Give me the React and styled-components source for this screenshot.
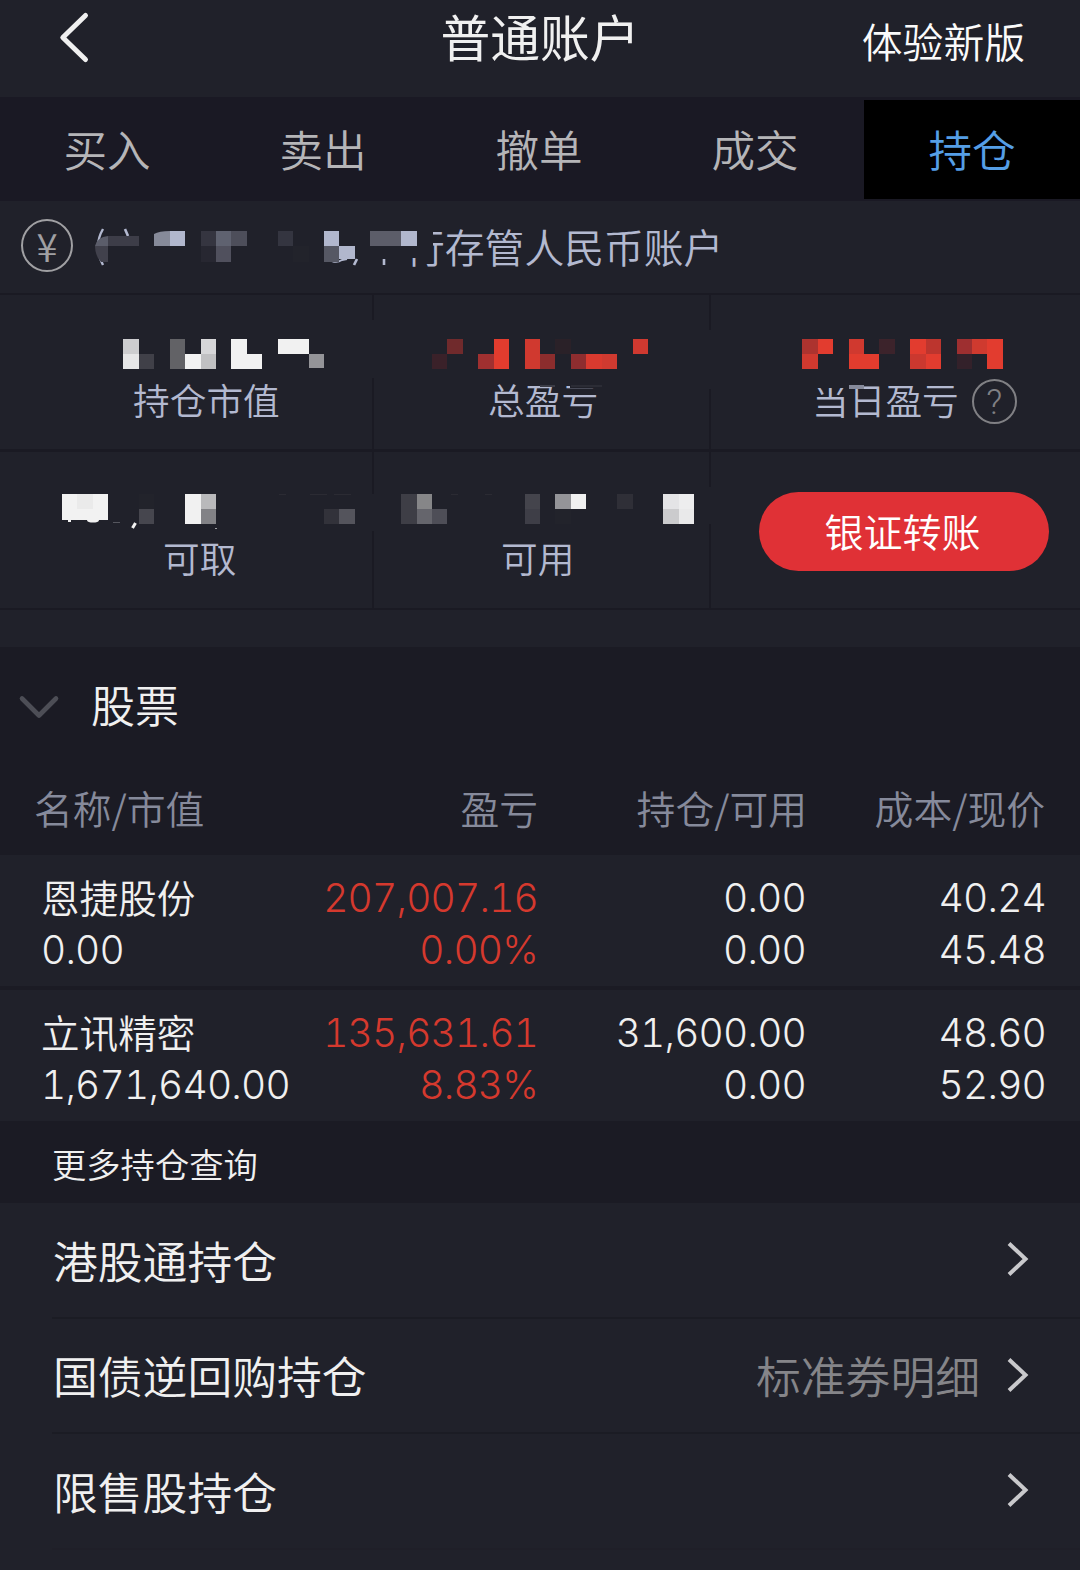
import React from 'react';
import styled, { createGlobalStyle } from 'styled-components';

const BG = '#20212a';
const DARK = '#1b1b24';
const LINE = '#1a1a23';
const MUTED = '#b3b9d0';
const RED = '#d5392e';

const GlobalStyle = createGlobalStyle`
  * { box-sizing: border-box; }
  body {
    margin: 0;
    background: ${BG};
    font-family: "Noto Sans CJK SC", sans-serif;
    font-weight: 350;
  }
`;

const Page = styled.main`
  width: 1080px;
  height: 1570px;
  overflow: hidden;
  background: ${BG};
  color: #f0f0f0;
  white-space: nowrap;
`;

const Header = styled.header`
  height: 97px;
  display: grid;
  grid-template-columns: 360px 360px 360px;
  align-items: start;
`;

const BackButton = styled.div`
  padding: 10px 0 0 58px;
  svg { display: block; }
`;

const Title = styled.h1`
  margin: 0;
  font-size: 49.8px;
  font-weight: 400;
  line-height: 71px;
  text-align: center;
`;

const NewVersion = styled.div`
  padding-right: 55px;
  font-size: 40.8px;
  line-height: 81px;
  text-align: right;
  color: #fafafa;
`;

const Tabs = styled.nav`
  height: 104px;
  display: grid;
  grid-template-columns: repeat(5, 1fr);
  padding: 3px 0 2px;
  background: #1a1924;
`;

const Tab = styled.div`
  padding-right: ${(p) => (p.$active ? 0 : 2)}px;
  font-size: 43.6px;
  line-height: 97px;
  text-align: center;
  color: ${(p) => (p.$active ? '#559ee6' : '#b5b5b8')};
  background: ${(p) => (p.$active ? '#000' : 'transparent')};
`;

const Account = styled.div`
  height: 92px;
  display: flex;
  align-items: flex-start;
`;

const Coin = styled.div`
  width: 52px;
  height: 53px;
  margin: 18px 0 0 21px;
  border: 2px solid #a0a0a3;
  border-radius: 50%;
  color: #a0a0a3;
  font-size: 38.5px;
  line-height: 48px;
  text-align: center;
`;

const AccountMask = styled.svg`
  display: block;
  z-index: 1;
  width: 332px;
  height: 92px;
  overflow: visible;
`;

const AccountName = styled.div`
  font-size: 39.8px;
  line-height: 90px;
  color: ${MUTED};
`;

const CutGlyph = styled.span`
  display: inline-block;
  clip-path: polygon(28px 0, 100% 0, 100% 100%, 0 100%, 0 57px, 28px 57px);
`;

const Metrics = styled.section`
  border-top: 2px solid ${LINE};
  border-bottom: 2px solid ${LINE};
`;

const MetricRow = styled.div`
  height: ${(p) => p.$height}px;
  display: grid;
  grid-template-columns: 372px 337px 371px;
  & + & { border-top: 3px solid ${LINE}; }
`;

const Metric = styled.div`
  display: flex;
  flex-direction: column;
  align-items: flex-start;
`;

const MetricValue = styled.svg`
  display: block;
  flex: none;
  z-index: 1;
  width: ${(p) => p.$width}px;
  height: 94px;
`;

const MetricLabel = styled.div`
  display: flex;
  align-items: center;
  margin-top: ${(p) => p.$top}px;
  padding-left: ${(p) => p.$indent}px;
  font-size: 36.7px;
  line-height: 50px;
  color: ${MUTED};
`;

const Divider = styled.div`
  width: 2px;
  height: ${(p) => p.$height}px;
  background: ${LINE};
`;

const MetricBody = styled.div`
  display: grid;
  grid-template-columns: ${(p) => (p.$divided ? '2px 1fr' : '1fr')};
`;

const DividerTrack = styled.div`
  display: flex;
  flex-direction: column;
  justify-content: space-between;
`;

const Help = styled.span`
  width: 45px;
  height: 45px;
  margin: 4px 0 0 13px;
  border: 2px solid #808084;
  border-radius: 50%;
  color: #808084;
  font-family: Roboto, sans-serif;
  font-size: 35px;
  font-weight: 300;
  line-height: 43px;
  text-align: center;
`;

const TransferButton = styled.button`
  display: block;
  width: 290px;
  height: 79px;
  margin: 40px 0 0 48px;
  padding: 0 3px 2px 0;
  border: 0;
  border-radius: 40px;
  background: #e03136;
  color: #fff;
  font: inherit;
  font-size: 39px;
  line-height: 77px;
`;

const Stocks = styled.section`
  margin-top: 37px;
  background: ${DARK};
`;

const StocksTitle = styled.div`
  height: 114px;
  display: flex;
  align-items: center;
  gap: 31px;
  padding-left: 18px;
  font-size: 44px;
  line-height: 114px;
  svg { margin-top: 7px; }
`;

const Row = styled.div`
  display: grid;
  grid-template-columns: 238px 266px 269px 238px;
  & > * { text-align: right; }
  & > :first-child { text-align: left; }
`;

const TableHead = styled(Row)`
  height: 94px;
  padding-left: 34px;
  font-size: 38.8px;
  line-height: 92px;
  color: #868a9b;
`;

const Holding = styled(Row)`
  height: ${(p) => (p.$last ? 131 : 135)}px;
  padding: 17px 0 0 41px;
  grid-template-columns: 232px 265px 268px 240px;
  background: ${BG};
  border-bottom: ${(p) => (p.$last ? 0 : 4)}px solid ${DARK};
`;

const Pair = styled.div`
  display: flex;
  flex-direction: column;
  font-family: Inter, "Noto Sans CJK SC", sans-serif;
  font-variant-numeric: tabular-nums;
  font-weight: 300;
  font-size: 39px;
  line-height: 51.5px;
  letter-spacing: -0.8px;
  color: ${(p) => (p.$gain ? RED : '#f0f0f0')};
`;

const StockName = styled.div`
  height: 51.5px;
  font-family: "Noto Sans CJK SC", sans-serif;
  font-weight: 350;
  font-size: 38.6px;
  line-height: 49px;
  letter-spacing: 0;
`;

const More = styled.div`
  height: 82px;
  padding-left: 52px;
  font-size: 34.3px;
  line-height: 84px;
`;

const Links = styled.section`
  padding-left: 52px;
`;

const LinkRow = styled.div`
  height: 115.5px;
  display: flex;
  align-items: center;
  padding: 0 49px 0 1px;
  border-bottom: 2px solid ${(p) => (p.$faint ? '#1f1f28' : '#1b1c24')};
  font-size: 44.8px;
  line-height: 66px;
`;

const Note = styled.span`
  margin: 0 25px 0 auto;
  color: #858589;
`;

const Arrow = styled.svg`
  display: block;
  margin: 0 0 1px ${(p) => (p.$push ? 'auto' : 0)};
`;

const ACCOUNT_CELLS = [
  [170, 231, 15, 15, '#b1b7cd'], [201, 231, 15, 15, '#353540'], [216, 231, 15, 15, '#5f6270'],
  [231, 231, 16, 15, '#4d4e5a'], [201, 246, 15, 16, '#272731'], [216, 246, 15, 16, '#50505d'],
  [278, 231, 15, 15, '#343540'], [293, 246, 16, 16, '#22232b'], [324, 231, 15, 15, '#b1b7cd'],
  [324, 246, 15, 16, '#565864'], [339, 246, 16, 13, '#b1b7cd'], [370, 231, 31, 15, '#5c5d69'],
  [401, 231, 16, 15, '#b1b7cd'], [108, 236, 31, 10, '#3d3d48'],
];

const MARKET_CELLS = [
  [123, 339, 16, 15, '#cdcdcf'], [123, 354, 16, 15, '#e6e6e7'], [139, 354, 15, 15, '#404048'],
  [170, 339, 15, 30, '#626266'], [185, 354, 16, 15, '#f2f2f2'], [201, 339, 15, 15, '#d6d6d8'],
  [201, 354, 15, 15, '#c0c0c2'], [231, 339, 16, 30, '#f1f1f1'], [247, 354, 15, 15, '#f1f1f1'],
  [278, 339, 31, 15, '#f1f1f1'], [309, 354, 15, 14, '#949498'],
];

const TOTAL_CELLS = [
  [432, 354, 15, 15, '#3a2129'], [447, 339, 16, 15, '#702a2c'], [478, 354, 16, 15, '#a03030'],
  [494, 339, 15, 30, '#e23c2e'], [525, 339, 15, 30, '#d0392f'], [540, 354, 15, 15, '#8c2d2d'],
  [555, 339, 16, 15, '#2a2128'], [571, 354, 15, 15, '#8e2d2f'], [586, 354, 16, 15, '#d93a2f'],
  [602, 354, 15, 15, '#cf3a30'], [633, 339, 15, 15, '#cf3930'],
  [486, 376, 120, 8, BG], [527, 384, 28, 2, BG], [570, 384, 33, 4, BG], [571, 385, 31, 2, '#2b2c35'],
  [540, 385, 15, 2, '#3b3c46'],
];

const DAY_CELLS = [
  [802, 339, 16, 15, '#ad332f'], [818, 339, 15, 15, '#e23c2f'], [802, 354, 16, 15, '#d0392f'],
  [849, 339, 15, 15, '#d0392f'], [849, 354, 30, 15, '#e23c2e'], [879, 339, 16, 15, '#3c232b'],
  [910, 339, 16, 15, '#e23c2f'], [926, 339, 15, 15, '#bc352e'], [910, 354, 16, 15, '#cb382f'],
  [926, 354, 15, 15, '#e23c2f'], [957, 339, 15, 15, '#9e2f30'], [972, 339, 15, 15, '#cf3a2f'],
  [987, 339, 16, 30, '#e23c2f'], [957, 354, 15, 15, '#33212a'],
  [812, 378, 36, 10, BG], [849, 380, 40, 6, BG], [849, 385, 15, 4, '#868a9b'],
];

const CASH_CELLS = [
  [62, 494, 46, 26, '#f2f2f2'], [77, 494, 16, 15, '#eaeaea'], [68, 520, 3, 2, '#f2f2f2'],
  [113, 522, 7, 1, '#55565e'], [139, 494, 15, 15, '#22232b'], [139, 509, 15, 15, '#46464e'],
  [185, 494, 16, 30, '#f1f1f1'], [201, 494, 15, 15, '#b9b9bb'], [201, 509, 15, 15, '#828286'],
  [215, 528, 2, 1, '#a0a0a4'], [324, 509, 15, 15, '#32323a'], [339, 509, 16, 15, '#54545c'],
  [279, 494, 7, 1, '#2b2b33'], [310, 494, 17, 1, '#2b2b33'], [334, 494, 17, 1, '#2b2b33'],
];

const AVAILABLE_CELLS = [
  [401, 494, 16, 30, '#3e3e46'], [417, 494, 15, 15, '#868688'], [417, 509, 15, 15, '#65656c'],
  [432, 509, 15, 15, '#4e4e57'], [525, 494, 15, 15, '#44444c'], [525, 509, 15, 15, '#3e3e47'],
  [555, 494, 16, 15, '#949498'], [571, 494, 15, 15, '#f0f0f0'], [555, 509, 16, 15, '#22232b'],
  [617, 494, 16, 15, '#2f2f37'], [663, 494, 16, 15, '#e4e4e6'], [679, 494, 15, 15, '#ededee'],
  [663, 509, 16, 15, '#cbcbcd'], [679, 509, 15, 15, '#e9e9ea'],
  [451, 494, 7, 1, '#2b2b33'], [485, 494, 7, 1, '#2b2b33'],
];

const HOLDINGS = [
  { name: '恩捷股份', value: '0.00', profit: '207,007.16', rate: '0.00%', held: '0.00', usable: '0.00', cost: '40.24', price: '45.48' },
  { name: '立讯精密', value: '1,671,640.00', profit: '135,631.61', rate: '8.83%', held: '31,600.00', usable: '0.00', cost: '48.60', price: '52.90' },
];

const Cells = ({ data }) =>
  data.map(([x, y, w, h, fill], i) => (
    <rect key={i} x={x} y={y} width={w} height={h} fill={fill} shapeRendering="crispEdges" />
  ));

const MetricCell = ({ x, y, width, cells, divider, top, indent, label, help, children }) => (
  <MetricBody $divided={!!divider}>
    {divider && (
      <DividerTrack>
        <Divider $height={divider[0]} />
        <Divider $height={divider[1]} />
      </DividerTrack>
    )}
    <Metric>
      <MetricValue $width={width} viewBox={`${x} ${y} ${width} 94`}>
        <Cells data={cells} />
        {children}
      </MetricValue>
      <MetricLabel $top={top} $indent={indent}>
        {label}
        {help && <Help>?</Help>}
      </MetricLabel>
    </Metric>
  </MetricBody>
);

const Forward = ({ push }) => (
  <Arrow $push={push} width="26" height="38" viewBox="0 0 26 38" fill="none" stroke="#c9c9cc" strokeWidth="4">
    <path d="M4 3.5 20.5 19 4 34.5" />
  </Arrow>
);

export default function App() {
  return (
    <Page>
      <GlobalStyle />
      <Header>
        <BackButton>
          <svg width="34" height="55" viewBox="0 0 34 55" fill="none" stroke="#f0f0f0" strokeWidth="5" strokeLinecap="round" strokeLinejoin="round">
            <path d="M27.5 5.5 4.8 27.5 27.5 49.5" />
          </svg>
        </BackButton>
        <Title>普通账户</Title>
        <NewVersion>体验新版</NewVersion>
      </Header>

      <Tabs>
        {['买入', '卖出', '撤单', '成交', '持仓'].map((t) => (
          <Tab key={t} $active={t === '持仓'}>{t}</Tab>
        ))}
      </Tabs>

      <Account>
        <Coin>¥</Coin>
        <AccountMask viewBox="73 201 332 92">
          <path d="M103 229Q93 246 103 265" fill="none" stroke={MUTED} strokeWidth="2.4" />
          <path d="M125 229 128 236" stroke={MUTED} strokeWidth="2.6" />
          <path d="M108 236v10H95q2-9 13-10Z" fill="#5b5d6a" />
          <path d="M108 246v16h-7q-6-6-6-16Z" fill="#41414c" />
          <path d="M154 246v-12q5-3 16-3v15Z" fill="#868a99" />
          <path d="M332 261q5 2 10-1l5-1" fill="none" stroke={MUTED} strokeWidth="2" />
          <path d="m357 259-3 6" stroke={MUTED} strokeWidth="2.6" />
          <path d="M384 259v6" stroke={MUTED} strokeWidth="2.6" />
          <Cells data={ACCOUNT_CELLS} />
        </AccountMask>
        <AccountName><CutGlyph>行</CutGlyph>存管人民币账户</AccountName>
      </Account>

      <Metrics>
        <MetricRow $height={154}>
          <MetricCell x={0} y={295} width={372} cells={MARKET_CELLS} top={-15} indent={133} label="持仓市值" />
          <MetricCell x={374} y={295} width={335} cells={TOTAL_CELLS} divider={[25, 71]} top={-15} indent={114} label="总盈亏" />
          <MetricCell x={711} y={295} width={369} cells={DAY_CELLS} divider={[35, 60]} top={-15} indent={101} label="当日盈亏" help />
        </MetricRow>
        <MetricRow $height={159}>
          <MetricCell x={0} y={452} width={372} cells={CASH_CELLS} top={-14} indent={163} label="可取">
            <ellipse cx="93" cy="520.5" rx="6" ry="2" fill="#f2f2f2" />
            <path d="m135.5 523-3 5" stroke="#f2f2f2" strokeWidth="3" />
          </MetricCell>
          <MetricCell x={374} y={452} width={335} cells={AVAILABLE_CELLS} divider={[42, 77]} top={-14} indent={127} label="可用" />
          <MetricBody $divided>
            <DividerTrack>
              <Divider $height={35} />
              <Divider $height={84} />
            </DividerTrack>
            <TransferButton>银证转账</TransferButton>
          </MetricBody>
        </MetricRow>
      </Metrics>

      <Stocks>
        <StocksTitle>
          <svg width="42" height="28" viewBox="0 0 42 28" fill="none" stroke="#4d4e56" strokeWidth="4.6" strokeLinecap="round" strokeLinejoin="round">
            <path d="M4 4.5 21 21.5 38 4.5" />
          </svg>
          股票
        </StocksTitle>
        <TableHead>
          <span>名称/市值</span>
          <span>盈亏</span>
          <span>持仓/可用</span>
          <span>成本/现价</span>
        </TableHead>
        {HOLDINGS.map((h, i) => (
          <Holding key={h.name} $last={i === HOLDINGS.length - 1}>
            <Pair><StockName>{h.name}</StockName><span>{h.value}</span></Pair>
            <Pair $gain><span>{h.profit}</span><span>{h.rate}</span></Pair>
            <Pair><span>{h.held}</span><span>{h.usable}</span></Pair>
            <Pair><span>{h.cost}</span><span>{h.price}</span></Pair>
          </Holding>
        ))}
        <More>更多持仓查询</More>
      </Stocks>

      <Links>
        <LinkRow>港股通持仓<Forward push /></LinkRow>
        <LinkRow>国债逆回购持仓<Note>标准券明细</Note><Forward /></LinkRow>
        <LinkRow $faint>限售股持仓<Forward push /></LinkRow>
      </Links>
    </Page>
  );
}
